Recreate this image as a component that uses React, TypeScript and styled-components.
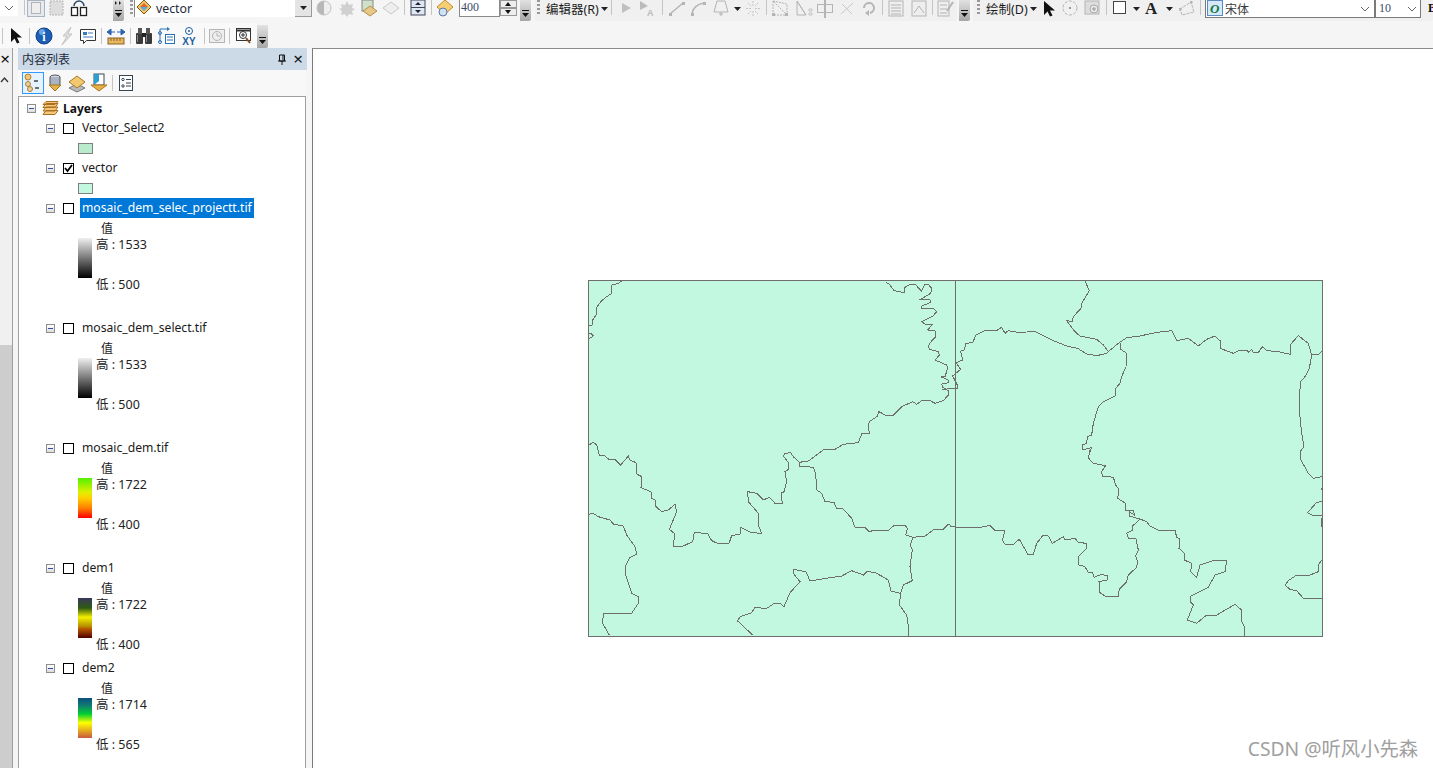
import { FC, ReactElement, ReactNode } from "react";
import styled, { createGlobalStyle } from "styled-components";

const GlobalStyle = createGlobalStyle`
  html, body { margin: 0; padding: 0; height: 100%; overflow: hidden; background: #f5f5f5; }
  body { font-family: "Noto Sans", "Noto Sans CJK SC", sans-serif; font-size: 12px; color: #1a1a1a; }
  svg { display: block; flex-shrink: 0; }
`;

const G = "#b4b4b4";

const Ico: FC<{ children: ReactNode; size?: number }> = ({ children, size = 20 }) => (
  <svg width={size} height={size} viewBox="0 0 20 20" fill="none">{children}</svg>
);

// toolbar glyphs, all drawn on a 20x20 grid
const icons: Record<string, ReactElement> = {
  pageOff: <Ico><rect x="1.500" y="1.500" width="17" height="16" fill="#e4eaf0" stroke="#a8b4c0" /><rect x="5.500" y="3.500" width="9" height="11" fill="#eee" stroke={G} /></Ico>,
  pageDots: <Ico><rect x="3" y="2" width="13" height="14" fill="#ddd" stroke={G} strokeDasharray="2 1" /></Ico>,
  copyDocs: <Ico><path d="M5 7a5 5 0 0 1 10 0" stroke="#2c4a6a" strokeWidth="1.500" /><rect x="2.500" y="8.500" width="6" height="8" fill="#fff" stroke="#222" strokeWidth="1.300" /><rect x="11.500" y="8.500" width="6" height="8" fill="#fff" stroke="#222" strokeWidth="1.300" /></Ico>,
  half: <Ico><circle cx="10" cy="9" r="7" fill="#eee" stroke="#c4c4c4" /><path d="M10 2a7 7 0 0 0 0 14z" fill="#b8b8b8" /></Ico>,
  star: <Ico><path d="M10 2l2 4 4-1-1 4 3 1-3 2 1 4-4-1-2 3-2-3-4 1 1-4-3-2 3-1-1-4 4 1z" fill="#d0d0d0" /></Ico>,
  picDiamond: <Ico><rect x="3" y="1" width="11" height="11" fill="#cfe0c8" stroke="#888" /><path d="M11 7l7 5-7 5-7-5z" fill="#e8c888" stroke="#b09050" /></Ico>,
  diamond: <Ico><path d="M10 3l8 6-8 6-8-6z" fill="#eee" stroke="#c8c8c8" /></Ico>,
  upDown: <Ico><rect x="3" y="1" width="14" height="15" fill="#dbe8f4" stroke="#445" /><path d="M3 8.500h14" stroke="#445" /><path d="M10 3l-3 3h6zM10 14l-3-3h6z" fill="#223" /></Ico>,
  sunClock: <Ico><path d="M9 1l8 7-8 7-8-7z" fill="#f6d070" stroke="#c08a30" /><circle cx="7" cy="13" r="4" fill="#cfe2f5" stroke="#5a7aa0" /></Ico>,
  vectorLayer: <Ico><path d="M8 1l7 7-7 7-7-7z" fill="#f2c566" stroke="#8a5a10" /><path d="M8 4l4 4H4z" fill="#d96a30" /><path d="M8 12L4 8h8z" fill="#60a8d8" /></Ico>,
  play: <Ico><path d="M6 4l9 5-9 5z" fill="#c0c0c0" /></Ico>,
  playA: <Ico><path d="M3 2l8 5-8 4z" fill="#bbb" /><text x="10" y="17" fontSize="9" fontWeight="700" fontFamily="Liberation Sans" fill="#bbb">A</text></Ico>,
  lineA: <Ico><path d="M3 15L16 4" stroke={G} strokeWidth="1.400" /><rect x="2" y="14" width="3" height="3" fill={G} /><rect x="15" y="3" width="3" height="3" fill={G} /></Ico>,
  lineB: <Ico><path d="M4 15Q5 6 16 4" stroke={G} strokeWidth="1.400" /><rect x="3" y="14" width="3" height="3" fill={G} /><rect x="15" y="3" width="3" height="3" fill={G} /></Ico>,
  poly: <Ico><path d="M6 2h8l3 11H3z" stroke={G} /><path d="M10 13v4M8 15h4" stroke={G} /></Ico>,
  spark: <Ico><path d="M10 2v5M10 12v5M3 9.500h5M12 9.500h5M5 4l3 3M15 4l-3 3M5 15l3-3M15 15l-3-3" stroke="#c4c4c4" strokeDasharray="2 1" /></Ico>,
  triEdit: <Ico><path d="M3 2v14h14zM3 2l14 3v11" stroke={G} strokeDasharray="2 1" /><rect x="2" y="14" width="3" height="3" fill={G} /><rect x="15" y="14" width="3" height="3" fill={G} /></Ico>,
  triDots: <Ico><path d="M3 2v14h9zM3 2l9 14" stroke={G} /><path d="M15 10h3v2h-3zM15 14h3v2h-3z" stroke={G} strokeWidth=".7" /></Ico>,
  split: <Ico><rect x="2.500" y="5.500" width="15" height="8" stroke={G} /><path d="M10 1v18" stroke={G} strokeWidth="2" /></Ico>,
  cross: <Ico><path d="M4 15L16 4M5 5l10 10" stroke="#c8c8c8" /></Ico>,
  rotate: <Ico><path d="M5 9a5 5 0 1 1 6 5" stroke={G} strokeWidth="2" /><path d="M10 11v6l-4-3z" fill={G} /></Ico>,
  table: <Ico><rect x="3" y="2" width="14" height="15" fill="#eee" stroke={G} /><path d="M5 6h10M5 9h10M5 12h10M5 15h10" stroke={G} /></Ico>,
  peak: <Ico><rect x="3" y="2" width="14" height="15" fill="#eee" stroke={G} /><path d="M5 14l5-7 5 7" stroke={G} /></Ico>,
  listEdit: <Ico><rect x="3" y="2" width="11" height="15" fill="#eee" stroke={G} /><path d="M5 6h7M5 10h7M5 14h7" stroke={G} /><path d="M12 12l6-9" stroke={G} strokeWidth="2" /></Ico>,
  arrow: <Ico><path d="M5 2v14l3.500-3.500 2.500 5 2.500-1-2.500-5H16z" fill="#111" /></Ico>,
  rotateCircle: <Ico><circle cx="10" cy="9" r="7" stroke={G} strokeDasharray="3 1.500" /><rect x="9" y="8" width="2" height="2" fill="#999" /></Ico>,
  frame: <Ico><rect x="2" y="2" width="14" height="13" fill="#ddd" stroke={G} /><circle cx="11" cy="10" r="4" fill="#e8e8e8" stroke="#aaa" /><path d="M9 10h4M11 8v4" stroke="#999" /></Ico>,
  rect: <Ico><rect x="3.500" y="2.500" width="12" height="12" fill="#fff" stroke="#444" /></Ico>,
  textA: <Ico><text x="3" y="15" fontSize="17" fontWeight="700" fontFamily="Liberation Serif" fill="#222">A</text></Ico>,
  polyEdit: <Ico><path d="M3 10l11-7 3 10-12 3z" stroke={G} strokeDasharray="3 1" /><rect x="2" y="9" width="2.500" height="2.500" fill={G} /><rect x="13" y="2" width="2.500" height="2.500" fill={G} /></Ico>,
  fontO: <Ico><rect x="1.500" y="1.500" width="15" height="15" fill="#d6e8fa" stroke="#5a8ac0" /><text x="4" y="14" fontSize="13" fontWeight="700" fontStyle="italic" fontFamily="Liberation Serif" fill="#0a7a3a">O</text></Ico>,
  cursor: <Ico><path d="M5 2v14l3.500-3.500 2.500 5 2.500-1-2.500-5H16z" fill="#111" /></Ico>,
  info: <Ico><circle cx="10" cy="10" r="8" fill="#1c5fb8" stroke="#123f80" /><circle cx="8" cy="6" r="3" fill="#6ea4e4" /><text x="10" y="15" textAnchor="middle" fontSize="12" fontWeight="700" fontFamily="Liberation Serif" fill="#fff">i</text></Ico>,
  bolt: <Ico><path d="M14 1L6 10h4l-5 9 10-11h-4z" fill="#ddd" stroke="#c4c4c4" /></Ico>,
  comment: <Ico><path d="M2.500 3.500h15v11h-9l-3 3v-3h-3z" fill="#fff" stroke="#333" /><rect x="5" y="6" width="4" height="3" fill="#3a78c0" /><path d="M10 7h5M5 11h10" stroke="#3a78c0" /></Ico>,
  ruler: <Ico><rect x="2" y="12" width="16" height="6" fill="#e8b860" stroke="#8a6420" /><path d="M5 12v3M8 12v3M11 12v3M14 12v3" stroke="#8a6420" /><path d="M1 6l4-3v6zM9 6H5M19 6l-4-3v6zM11 6h4" fill="#2a62b0" stroke="#2a62b0" /></Ico>,
  binoculars: <Ico><rect x="2" y="7" width="7" height="11" rx="1" fill="#3a3a3a" /><rect x="11" y="7" width="7" height="11" rx="1" fill="#3a3a3a" /><rect x="4" y="2" width="4" height="6" fill="#555" /><rect x="12" y="2" width="4" height="6" fill="#555" /><rect x="8" y="7" width="4" height="4" fill="#222" /><path d="M3.500 9v7M12.500 9v7" stroke="#8a8a8a" /></Ico>,
  graph: <Ico><rect x="8.500" y="8.500" width="9" height="9" fill="#fff" stroke="#2a72b8" /><path d="M10 11h6M10 14h6" stroke="#2a72b8" /><circle cx="3" cy="7" r="1.500" stroke="#2a72b8" /><circle cx="3" cy="16" r="1.500" stroke="#2a72b8" /><path d="M3 3v13M3 3h7" stroke="#2a72b8" /><path d="M10 1l3 2-3 2z" fill="#2a72b8" /></Ico>,
  xy: <Ico><circle cx="10" cy="5" r="3.500" stroke="#1f5f9f" /><circle cx="10" cy="5" r="1" fill="#1f5f9f" /><text x="10" y="19" textAnchor="middle" fontSize="10" fontWeight="700" fontFamily="Liberation Sans" fill="#1f5f9f">XY</text></Ico>,
  clock: <Ico><rect x="2.500" y="3.500" width="15" height="13" fill="#eee" stroke={G} /><circle cx="10" cy="10" r="4.500" stroke={G} /><path d="M10 7v3h3" stroke={G} /></Ico>,
  zoomWin: <Ico><rect x="2.500" y="2.500" width="14" height="12" fill="#fff" stroke="#333" /><path d="M3 4.500h13" stroke="#333" strokeWidth="2" /><circle cx="9" cy="9" r="3.500" fill="#fff" stroke="#333" /><path d="M7 9h4M9 7v4" stroke="#333" /><path d="M12 12l4 5" stroke="#8a4a20" strokeWidth="2" /></Ico>,
  tocDraw: <Ico><circle cx="5" cy="4" r="3" fill="#f0c878" stroke="#b08030" /><circle cx="5" cy="11" r="2.500" fill="#e8d0a0" stroke="#b08030" /><circle cx="7" cy="16" r="2.500" fill="#e8d0a0" stroke="#b08030" /><path d="M11 8h4M12 15h4" stroke="#444" strokeWidth="1.500" /></Ico>,
  tocSource: <Ico><ellipse cx="10" cy="4" rx="5" ry="2" fill="#cfd6e0" stroke="#555" /><path d="M5 4v7c0 1 2 2 5 2s5-1 5-2V4" fill="#a8b4c4" stroke="#555" /><path d="M4 12h12l-6 6z" fill="#e8b048" stroke="#a87820" /></Ico>,
  tocLayers: <Ico><path d="M10 11l8 4-8 4-8-4z" fill="#bbb" stroke="#777" /><path d="M10 3l8 6-8 6-8-6z" fill="#f2c870" stroke="#a87820" /></Ico>,
  tocSelect: <Ico><rect x="5" y="1" width="10" height="11" fill="#fff" stroke="#445" /><path d="M5 1h5v7l-5 4z" fill="#2a9fd0" /><path d="M2 12h16l-8 6z" fill="#e8b048" stroke="#a87820" /></Ico>,
  tocOptions: <Ico><rect x="3.500" y="2.500" width="13" height="15" fill="#fff" stroke="#345" /><circle cx="7" cy="6.500" r="1.200" stroke="#345" /><circle cx="7" cy="13" r="1.200" stroke="#345" /><path d="M10 6.500h5M10 10h5M10 13h5" stroke="#345" /></Ico>,
};

const Dropdown: FC = () => (
  <svg width="7" height="4" viewBox="0 0 7 4"><path d="M0 0h7L3.500 4z" fill="#222" /></svg>
);

const Chevron: FC = () => (
  <svg width="10" height="6" viewBox="0 0 10 6" fill="none"><path d="M1 1l4 4 4-4" stroke="#666" /></svg>
);

const GripMark: FC = () => (
  <svg width="7" height="8" viewBox="0 0 7 8"><path d="M0 0h7v1H0zM0 3h7L3.500 7z" fill="#111" /></svg>
);

const GripArrows: FC = () => (
  <svg width="7" height="4" viewBox="0 0 7 4"><path d="M0 0l2 2-2 2zM4 0l2 2-2 2z" fill="#222" /></svg>
);

type Item = [string, number];

const Toolset: FC<{ items: Item[] }> = ({ items }) => (
  <>
    {items.map(([name, w], i) =>
      name === "|" ? <Sep key={i} $ml={w} /> : name === "v" ? <Cell key={i} $w={w}><Dropdown /></Cell> : <Cell key={i} $w={w}>{icons[name]}</Cell>
    )}
  </>
);

const layers = [
  { name: "mosaic_dem_selec_projectt.tif", hi: "1533", lo: "500", ramp: "#f0f0f0, #000", selected: true, tail: true },
  { name: "mosaic_dem_select.tif", hi: "1533", lo: "500", ramp: "#f0f0f0, #000", tail: true },
  { name: "mosaic_dem.tif", hi: "1722", lo: "400", ramp: "#55f000, #ddf000 35%, #ffd000 50%, #ff8000 75%, #ff0000", tail: true },
  { name: "dem1", hi: "1722", lo: "400", ramp: "#38385c, #2f5a12 25%, #f4f000 48%, #b08a00 72%, #c06000 75%, #500000" },
  { name: "dem2", hi: "1714", lo: "565", ramp: "#0a4f80, #108070 20%, #00d030 40%, #ffff00 62%, #c85a40" },
];

// boundary lines traced from the reference, each group in 3x crop coordinates
const tracesA = [
  "125,33 115,40 95,45 93,72 80,80 65,92 50,112 48,135 38,150 36,165 27,168",
  "27,190 33,190 40,198 33,203 27,206",
  "917,38 928,42 942,62 972,68 975,52 992,42 1005,42 1024,63 1033,45 1045,43 1055,55 1052,70 1022,88 1050,90 1050,98 1025,108 1025,115 1060,115 1070,125 1060,137 1025,155 1035,162 1058,162 1043,180 1065,183 1067,200 1055,212 1045,228 1048,238 1075,245 1078,255 1065,270 1100,285 1103,295 1095,320 1082,320 1105,330 1105,338 1085,342 1088,352 1105,362 1105,375 1090,392 1065,400 1050,392 1025,392 1010,403 998,395 965,410 940,435 915,435 895,424 893,438 868,455 865,470 868,490 845,492 835,518 790,523 765,538 730,540",
];
const tracesB = [
  "730,0 685,33 658,37 658,48 700,52 707,70 710,120 725,130 735,155 762,157 770,175 790,177 815,205 825,232 855,233 868,245 885,240 925,242 940,228 975,225 982,235 977,255 1000,262 1035,258 1060,240 1090,238 1105,222 1120,232",
  "658,37 640,20 632,8 615,10 610,18 625,38 625,58 615,65 620,95 612,125 603,130 607,160 585,160 568,142 550,150 530,130 503,125 505,155 535,190 535,225 545,250 515,248 483,232 480,252 455,257 447,280 412,280 395,272 383,250 343,248 338,275 310,288 281,289 283,250 268,238 290,185 285,163 265,180 245,185 228,170 225,150 215,145 213,125 183,113 185,80 170,72 168,38 150,30 145,18 122,45 107,30 85,27 72,15 58,15 50,-15 40,-23 27,-15",
  "1000,262 990,285 997,300 990,350 997,392 970,405 962,430 933,423 925,390 885,367 860,365 850,375 815,362 785,378 770,380 690,393 678,365 640,358 640,370 660,395 630,428 612,470 600,460 580,462 560,475 525,473 515,488 480,500 473,513 518,555",
  "962,430 958,465 980,495 987,540 985,558",
  "27,193 40,190 55,200 90,210 100,222 130,228 140,255 165,290 170,312 150,322 135,350 135,370 155,430 175,440 175,460 155,490 70,492 68,520 88,555",
];
const tracesC = [
  "405,33 418,62 395,100 393,115 370,140 367,155 350,152 375,185 390,198 440,208 460,225 475,245",
  "475,245 505,220 530,203 570,198 620,187 665,182 680,212 715,205 745,228 770,208 795,198 810,212 810,235 850,250 870,240 890,240 895,247 905,238 910,247 925,247 937,230 950,242 985,245 1020,253 1020,225 1045,197 1075,220 1085,255 1105,253 1115,245",
  "475,245 470,250 440,257 410,252 383,235 350,228 305,210 255,185 205,187 175,182 165,190 155,172 140,182 105,182 78,195 68,218 48,220 42,240 32,243 38,270 18,278 32,298 8,318 22,345 22,355 -25,358",
  "510,220 512,238 530,250 528,290 515,320 510,340 497,355 495,378 460,395 445,410 430,460 425,495 412,500 410,520 397,525 397,540 425,533 415,560 420,570",
  "1085,255 1078,295 1065,320 1052,335 1048,380 1050,440 1055,490 1062,530 1050,545 1050,565",
];
const tracesD = [
  "420,0 415,25 430,40 467,47 455,65 457,78 490,82 497,105 507,118 503,145 527,160 527,180 550,180 553,195 537,185 537,198 570,207 590,215 600,228 625,240 675,240 680,262 690,268 687,295 703,310 703,330 725,340 722,365 740,382 750,345 790,332 830,332 825,365 795,375 775,412 720,440 720,455 730,465 712,510 740,520 770,495 800,495 855,463 875,480 875,515 883,530 883,557",
  "0,228 20,232 90,232 120,226 135,242 165,243 157,270 165,283 190,283 208,268 235,315 250,313 260,280 280,255 295,258 307,280 340,260 345,270 375,265 385,277 408,280 410,295 385,320 387,345 405,350 415,367 428,368 432,382 455,373 473,378 472,390 447,395 450,428 465,438 505,438 508,418 530,395 535,375 560,352 563,335 557,318 565,300 558,267 535,265 530,250 548,240 548,228 570,207",
  "1050,0 1050,25 1075,70 1090,85 1115,80",
  "1115,155 1100,157 1073,188 1085,195 1115,195",
  "1115,330 1105,345 1105,365 1080,375 1040,375 1015,392 1005,405 1020,418 1040,422 1060,445 1115,445",
  "1115,113 1115,120",
  "1115,205 1115,230",
];

const TraceGroup: FC<{ lines: string[]; x: number; y: number }> = ({ lines, x, y }) => (
  <g transform={`translate(${x} ${y}) scale(${1 / 3})`}>
    {lines.map((p, i) => <polyline key={i} points={p} fill="none" stroke="#6e6e6e" strokeWidth="1" vectorEffect="non-scaling-stroke" />)}
  </g>
);

const MapFrame: FC = () => (
  <svg width="735" height="357" viewBox="588 280 735 357" shapeRendering="crispEdges">
    <rect x="588.500" y="280.500" width="734" height="356" fill="#c2f8e0" stroke="#6e6e6e" />
    <path d="M955.500 280v356" stroke="#6e6e6e" />
    <TraceGroup lines={tracesA} x={580} y={270} />
    <TraceGroup lines={tracesB} x={580} y={450} />
    <TraceGroup lines={tracesC} x={950} y={270} />
    <TraceGroup lines={tracesD} x={950} y={450} />
  </svg>
);

const LayerRow: FC<{ name: string; checked?: boolean; selected?: boolean }> = ({ name, checked, selected }) => (
  <Row>
    <Expander $indent={27} />
    <Check>{checked && <svg width="9" height="9" viewBox="0 0 9 9" fill="none"><path d="M1 4l2.500 3L8 1" stroke="#000" strokeWidth="1.800" /></svg>}</Check>
    <LayerName $selected={selected}>{name}</LayerName>
  </Row>
);

const App: FC = (): ReactElement => {
  return (
    <Page>
      <GlobalStyle />
      <Header>
        <TopRow>
          <StubSelect><Chevron /></StubSelect>
          <Toolset items={[["|", 6], ["pageOff", 21], ["pageDots", 22], ["copyDocs", 22]]} />
          <Gap $w={23} />
          <Grip $h={21} $split><GripArrows /><GripMark /></Grip>
          <Gap $w={6} />
          <Dots />
          <LayerCombo>
            {icons.vectorLayer}
            <ComboText>vector</ComboText>
            <ComboButton><Dropdown /></ComboButton>
          </LayerCombo>
          <Toolset items={[["half", 24], ["star", 22], ["picDiamond", 22], ["diamond", 22], ["|", 2], ["upDown", 26], ["|", 0], ["sunClock", 27]]} />
          <ScaleInput>400</ScaleInput>
          <Spin><SpinPart $up /><SpinPart /></Spin>
          <Gap $w={3} />
          <Grip $h={21}><GripMark /></Grip>
          <Gap $w={4} />
          <Strip>
            <Gap $w={2} />
            <Dots />
            <Gap $w={6} />
            <MenuLabel $w={65}>编辑器(R)<Dropdown /></MenuLabel>
            <Toolset items={[["|", 0], ["play", 28], ["playA", 14], ["|", 8], ["lineA", 27], ["lineB", 16], ["poly", 29], ["v", 5], ["spark", 26], ["|", 0], ["triEdit", 26], ["triDots", 21], ["split", 22], ["cross", 22], ["rotate", 22], ["|", 2], ["table", 25], ["peak", 22], ["|", 2], ["listEdit", 24]]} />
          </Strip>
          <Gap $w={2} />
          <Grip $h={21}><GripMark /></Grip>
          <Gap $w={3} />
          <Strip $fill>
            <Gap $w={4} />
            <Dots />
            <Gap $w={6} />
            <MenuLabel $w={54}>绘制(D)<Dropdown /></MenuLabel>
            <Toolset items={[["arrow", 18], ["rotateCircle", 24], ["frame", 22], ["|", 2], ["rect", 26], ["v", 6], ["textA", 26], ["v", 9], ["polyEdit", 26], ["|", 0]]} />
            <Gap $w={4} />
            <FontSelect $w={170} $pr={4}>
              {icons.fontO}
              <FontName>宋体</FontName>
              <Chevron />
            </FontSelect>
            <FontSelect $w={46} $pr={3}>
              <SizeValue>10</SizeValue>
              <Chevron />
            </FontSelect>
            <BoldButton>B</BoldButton>
          </Strip>
        </TopRow>
        <SecondRow>
          <SecondStrip>
            <Toolset items={[["|", 2], ["cursor", 26], ["|", 0], ["info", 28], ["bolt", 18], ["comment", 24], ["|", 1], ["ruler", 28], ["|", 0], ["binoculars", 26], ["graph", 20], ["xy", 24], ["|", 3], ["clock", 24], ["|", 0], ["zoomWin", 28]]} />
          </SecondStrip>
          <Grip $h={23}><GripMark /></Grip>
        </SecondRow>
      </Header>
      <Body>
        <Rail>
          <RailClose>×</RailClose>
          <RailTrack>
            <RailUp><svg width="9" height="6" viewBox="0 0 9 6" fill="none"><path d="M1 5l3.500-4L8 5" stroke="#333" strokeWidth="1.300" /></svg></RailUp>
            <RailThumb />
          </RailTrack>
        </Rail>
        <Panel>
          <PanelHead>
            <PanelTitle>内容列表</PanelTitle>
            <svg width="10" height="11" viewBox="0 0 10 11" fill="none"><path d="M2.500 1h5v6h-5zM1 7h8M5 7v4M6 1v5" stroke="#111" /></svg>
            <PanelClose>×</PanelClose>
          </PanelHead>
          <PanelTools>
            <ActiveTool>{icons.tocDraw}</ActiveTool>
            <Toolset items={[["tocSource", 22], ["tocLayers", 22], ["tocSelect", 22], ["|", 2], ["tocOptions", 26]]} />
          </PanelTools>
          <Tree>
            <Row>
              <Expander $indent={8} />
              <RootIcon>
                <svg width="17" height="14" viewBox="0 0 17 14" fill="#f4c878" stroke="#a87020"><path d="M4 9.500h12l-3 4H1zM4 6h12l-3 4H1zM4 2.500h12l-3 4H1zM4 .5h12l-3 3H1z" /></svg>
              </RootIcon>
              <RootName>Layers</RootName>
            </Row>
            <LayerRow name="Vector_Select2" />
            <Row><Swatch $fill="#b9eccd" /></Row>
            <LayerRow name="vector" checked />
            <Row><Swatch $fill="#c2f8e0" /></Row>
            {layers.map((l) => (
              <LayerGroup key={l.name} $tail={l.tail}>
                <LayerRow name={l.name} selected={l.selected} />
                <ValueTitle>值</ValueTitle>
                <Legend>
                  <Ramp style={{ background: `linear-gradient(to bottom, ${l.ramp})` }} />
                  <RampLabels>
                    <span>高 : {l.hi}</span>
                    <span>低 : {l.lo}</span>
                  </RampLabels>
                </Legend>
              </LayerGroup>
            ))}
          </Tree>
        </Panel>
        <Canvas>
          <MapFrame />
          <Watermark>CSDN @听风小先森</Watermark>
        </Canvas>
      </Body>
    </Page>
  );
};

const Page = styled.div`
  width: 1433px;
  height: 768px;
  overflow: hidden;
  display: flex;
  flex-direction: column;
`;
const Header = styled.header`
  height: 48px;
  flex: none;
  background: #f5f5f5;
  overflow: hidden;
`;
const TopRow = styled.div`
  height: 21px;
  display: flex;
  align-items: flex-start;
  overflow: hidden;
`;
const SecondRow = styled.div`
  height: 25px;
  margin-top: 2px;
  display: flex;
  align-items: flex-end;
`;
const SecondStrip = styled.div`
  width: 257px;
  height: 25px;
  display: flex;
  align-items: center;
  background: #f9f9f9;
`;
const PanelTools = styled.div`
  height: 26px;
  flex: none;
  display: flex;
  align-items: center;
  padding-left: 4px;
  background: #f8f8f8;
`;
const Strip = styled.div<{ $fill?: boolean }>`
  height: 21px;
  display: flex;
  align-items: flex-start;
  background: #f0f0f0;
  border-bottom-right-radius: 3px;
  flex: ${(p) => (p.$fill ? "1" : "none")};
  overflow: hidden;
`;
const Cell = styled.div<{ $w: number }>`
  width: ${(p) => p.$w}px;
  height: 17px;
  flex: none;
  display: flex;
  align-items: center;
  justify-content: center;
  ${SecondStrip} &, ${PanelTools} & {
    height: 22px;
  }
`;
const Gap = styled.div<{ $w: number }>`
  width: ${(p) => p.$w}px;
  flex: none;
`;
const Sep = styled.div<{ $ml: number }>`
  width: 1px;
  height: 15px;
  margin-left: ${(p) => p.$ml}px;
  background: #c4c4c4;
  flex: none;
  ${SecondStrip} &, ${PanelTools} & {
    height: 16px;
    align-self: center;
  }
`;
const Grip = styled.div<{ $h: number; $split?: boolean }>`
  width: 11px;
  height: ${(p) => p.$h}px;
  flex: none;
  display: flex;
  flex-direction: column;
  align-items: center;
  justify-content: ${(p) => (p.$split ? "space-between" : "flex-end")};
  padding: ${(p) => (p.$split ? "1px" : "0")} 0 3px;
  box-sizing: border-box;
  background: linear-gradient(to bottom, #e2e2e2, #a6a6a6);
  border-bottom-right-radius: 2px;
`;
const Dots = styled.div`
  width: 3px;
  height: 15px;
  flex: none;
  background: repeating-linear-gradient(to bottom, #9a9a9a 0 2px, transparent 2px 4px);
`;
const StubSelect = styled.div`
  width: 18px;
  height: 16px;
  flex: none;
  background: #fff;
  display: flex;
  align-items: center;
  justify-content: center;
`;
const LayerCombo = styled.div`
  width: 178px;
  height: 17px;
  margin-left: 1px;
  flex: none;
  display: flex;
  align-items: center;
  padding-left: 1px;
  box-sizing: border-box;
  background: #fff;
  border-left: 1px solid #8a8a8a;
`;
const ComboText = styled.span`
  flex: 1;
  font-size: 12.3px;
  color: #1c2a3a;
`;
const ComboButton = styled.div`
  width: 17px;
  height: 17px;
  background: #e4e4e4;
  border-right: 1px solid #999;
  border-bottom: 1px solid #999;
  box-sizing: border-box;
  display: flex;
  align-items: center;
  justify-content: center;
`;
const ScaleInput = styled.div`
  width: 41px;
  height: 17px;
  flex: none;
  box-sizing: border-box;
  padding-left: 1px;
  background: #fff;
  border: 1px solid #8a8a8a;
  border-top: 0;
  font: 12px/15px "Liberation Serif", serif;
  color: #3b4a6b;
`;
const Spin = styled.div`
  width: 17px;
  height: 16px;
  flex: none;
  display: flex;
  flex-direction: column;
`;
const SpinPart = styled.div<{ $up?: boolean }>`
  height: 8px;
  background: #eee;
  border: 1px solid #999;
  box-sizing: border-box;
  position: relative;
  &::after {
    content: "";
    position: absolute;
    left: 4px;
    top: 1px;
    border-left: 3px solid transparent;
    border-right: 3px solid transparent;
    ${(p) => (p.$up ? "border-bottom: 4px solid #111;" : "border-top: 4px solid #111;")}
  }
`;
const MenuLabel = styled.div<{ $w: number }>`
  width: ${(p) => p.$w}px;
  height: 17px;
  flex: none;
  display: flex;
  align-items: center;
  gap: 2px;
  font-size: 12.5px;
  color: #1c1c1c;
  white-space: nowrap;
`;
const FontSelect = styled.div<{ $w: number; $pr: number }>`
  width: ${(p) => p.$w}px;
  height: 18px;
  flex: none;
  box-sizing: border-box;
  padding-right: ${(p) => p.$pr}px;
  display: flex;
  align-items: center;
  background: #fff;
  border: 1px solid #7a7a7a;
  border-top: 0;
`;
const FontName = styled.span`
  flex: 1;
  margin-left: -1px;
  font-size: 12px;
  color: #3a3a3a;
`;
const SizeValue = styled.span`
  flex: 1;
  padding-left: 3px;
  font: 12px "Liberation Serif", serif;
  color: #3b4a6b;
`;
const BoldButton = styled.span`
  margin-left: 7px;
  font: 700 12px/16px "Liberation Serif", serif;
  color: #111;
`;
const Body = styled.main`
  flex: 1;
  min-height: 0;
  display: flex;
`;
const Rail = styled.aside`
  width: 12px;
  flex: none;
  display: flex;
  flex-direction: column;
  background: #f0f0f0;
`;
const RailClose = styled.div`
  height: 22px;
  line-height: 22px;
  font-size: 17px;
  padding-right: 2px;
  text-align: center;
  color: #111;
`;
const RailTrack = styled.div`
  flex: 1;
  display: flex;
  flex-direction: column;
  justify-content: space-between;
`;
const RailUp = styled.div`
  height: 20px;
  display: flex;
  align-items: center;
`;
const RailThumb = styled.div`
  height: 423px;
  background: #cdcdcd;
`;
const Panel = styled.section`
  width: 300px;
  flex: none;
  box-sizing: border-box;
  padding: 0 6px 0 5px;
  display: flex;
  flex-direction: column;
  background: #f5f5f5;
  border-left: 1px solid #a0a0a0;
`;
const PanelHead = styled.div`
  height: 22px;
  flex: none;
  margin-right: -1px;
  display: flex;
  align-items: center;
  padding-left: 4px;
  background: #ccdae8;
`;
const PanelTitle = styled.div`
  flex: 1;
  font-size: 12px;
  color: #1c2a3a;
`;
const PanelClose = styled.div`
  width: 18px;
  margin-left: 2px;
  text-align: center;
  font-size: 17px;
  line-height: 20px;
  color: #111;
`;
const ActiveTool = styled.div`
  width: 22px;
  height: 22px;
  box-sizing: border-box;
  flex: none;
  display: flex;
  align-items: center;
  justify-content: center;
  background: #e5f3ff;
  border: 1px solid #3399ff;
`;
const Tree = styled.div`
  flex: 1;
  min-height: 0;
  overflow: hidden;
  box-sizing: border-box;
  padding-top: 1px;
  background: #fff;
  border: 1px solid #a0a0a0;
  border-bottom: 0;
`;
const Row = styled.div`
  height: 20px;
  display: flex;
  align-items: center;
`;
const Expander = styled.div<{ $indent: number }>`
  width: 9px;
  height: 9px;
  margin-left: ${(p) => p.$indent}px;
  flex: none;
  box-sizing: border-box;
  border: 1px solid #8d8d8d;
  background: linear-gradient(to bottom, #fff, #dcdcdc);
  position: relative;
  &::after {
    content: "";
    position: absolute;
    left: 1px;
    right: 1px;
    top: 3px;
    height: 1px;
    background: #3050a0;
  }
`;
const Check = styled.div`
  width: 11px;
  height: 11px;
  margin-left: 8px;
  flex: none;
  box-sizing: border-box;
  border: 1px solid #000;
  background: #fff;
  display: flex;
  align-items: center;
  justify-content: center;
`;
const LayerName = styled.div<{ $selected?: boolean }>`
  margin-left: 6px;
  padding: 0 2px;
  line-height: 20px;
  font-size: 12.15px;
  white-space: nowrap;
  color: ${(p) => (p.$selected ? "#fff" : "#1a1a1a")};
  background: ${(p) => (p.$selected ? "#0078d7" : "transparent")};
`;
const RootIcon = styled.div`
  margin-left: 6px;
  flex: none;
`;
const RootName = styled.div`
  margin-left: 4px;
  font-size: 12px;
  font-weight: 700;
  color: #111;
`;
const Swatch = styled.div<{ $fill: string }>`
  width: 15px;
  height: 11px;
  margin-left: 59px;
  box-sizing: border-box;
  background: ${(p) => p.$fill};
  border: 1px solid #808080;
`;
const LayerGroup = styled.div<{ $tail?: boolean }>`
  padding-bottom: ${(p) => (p.$tail ? 20 : 0)}px;
`;
const ValueTitle = styled.div`
  height: 20px;
  line-height: 22px;
  margin-left: 82px;
  font-size: 12px;
  color: #222;
`;
const Legend = styled.div`
  height: 60px;
  margin-left: 59px;
  display: flex;
  align-items: flex-start;
`;
const Ramp = styled.div`
  width: 14px;
  height: 40px;
  flex: none;
`;
const RampLabels = styled.div`
  margin-left: 4px;
  height: 56px;
  margin-top: -1px;
  display: flex;
  flex-direction: column;
  justify-content: space-between;
  font-size: 12.5px;
  line-height: 16px;
  color: #222;
`;
const Canvas = styled.div`
  flex: 1;
  min-width: 0;
  box-sizing: border-box;
  padding: 231px 0 0 275px;
  background: #fff;
  border-left: 1px solid #7a7a7a;
  border-top: 1px solid #8a8a8a;
  position: relative;
`;
const Watermark = styled.div`
  position: absolute;
  right: 15px;
  bottom: 7px;
  font-size: 19.3px;
  line-height: 24px;
  color: #a0a0a0;
`;

export default App;
